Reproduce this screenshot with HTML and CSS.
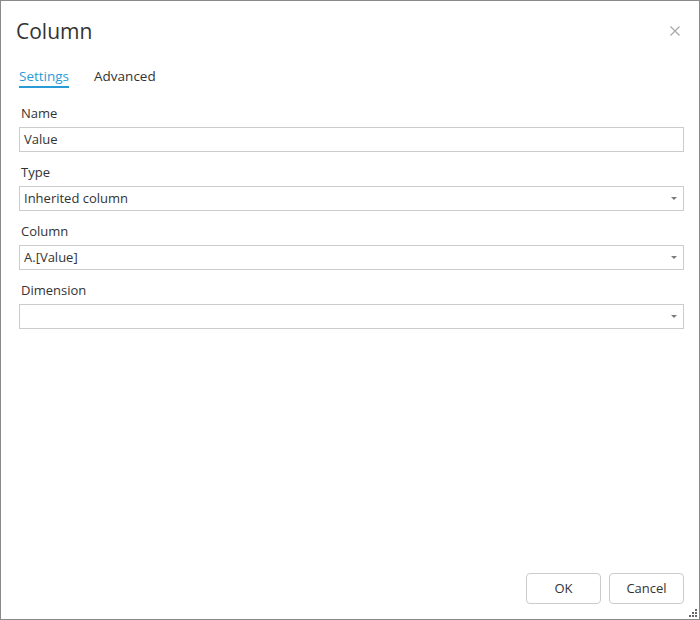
FILE: index.html
```html
<!DOCTYPE html>
<html>
<head>
<meta charset="utf-8">
<link rel="stylesheet" href="styles.css">
</head>
<body>
<div class="dialog">
  <div class="header">
    <div class="title">Column</div>
    <svg class="close" width="10" height="10" viewBox="0 0 10 10"><path d="M0.5 0.5L9.5 9.5M9.5 0.5L0.5 9.5" stroke="#a8a8a8" stroke-width="1.2" fill="none"/></svg>
  </div>
  <div class="tabs">
    <div class="tab active">Settings</div>
    <div class="tab">Advanced</div>
  </div>
  <div class="form">
    <div class="field">
      <div class="label">Name</div>
      <div class="input">Value</div>
    </div>
    <div class="field">
      <div class="label">Type</div>
      <div class="input select">Inherited column<span class="arrow"></span></div>
    </div>
    <div class="field">
      <div class="label">Column</div>
      <div class="input select">A.[Value]<span class="arrow"></span></div>
    </div>
    <div class="field">
      <div class="label">Dimension</div>
      <div class="input select"><span class="arrow"></span></div>
    </div>
  </div>
  <div class="footer">
    <div class="btn">OK</div>
    <div class="btn">Cancel</div>
  </div>
  <svg class="grip" width="9" height="9" viewBox="0 0 9 9">
    <rect x="6" y="0" width="2" height="2" fill="#666"/>
    <rect x="3" y="3" width="2" height="2" fill="#666"/>
    <rect x="6" y="3" width="2" height="2" fill="#666"/>
    <rect x="0" y="6" width="2" height="2" fill="#666"/>
    <rect x="3" y="6" width="2" height="2" fill="#666"/>
    <rect x="6" y="6" width="2" height="2" fill="#666"/>
  </svg>
</div>
</body>
</html>
```

FILE: styles.css
```css
html, body {
  margin: 0;
  padding: 0;
  background: #fff;
}
.dialog {
  width: 700px;
  height: 620px;
  box-sizing: border-box;
  border: 1px solid #8a8a8a;
  display: flex;
  flex-direction: column;
  position: relative;
  font-family: "Open Sans", "Noto Sans", sans-serif;
  color: #333;
  font-size: 13px;
}
.header {
  display: flex;
  justify-content: space-between;
  align-items: center;
  padding: 14px 19px 0 15px;
  height: 32px;
}
.title {
  font-size: 21px;
  line-height: 32px;
  color: #333;
}
.close {
  display: block;
}
.tabs {
  display: flex;
  gap: 25px;
  padding: 0 0 0 18px;
  margin-top: 19px;
}
.tab {
  line-height: 20px;
  border-bottom: 2px solid transparent;
  font-size: 13.5px;
}
.tab.active {
  color: #2b9bd7;
  border-bottom-color: #2b9bd7;
}
.form {
  display: flex;
  flex-direction: column;
  gap: 10px;
  padding: 0 15px 0 18px;
  margin-top: 15px;
  flex: 1;
}
.field {
  display: flex;
  flex-direction: column;
}
.label {
  line-height: 20px;
  margin: 0 0 4px 2px;
}
.input {
  height: 25px;
  box-sizing: border-box;
  border: 1px solid #cccccc;
  line-height: 23px;
  padding: 0 4px;
  position: relative;
}
.arrow {
  position: absolute;
  right: 6px;
  top: 10px;
  width: 0;
  height: 0;
  border-left: 3px solid transparent;
  border-right: 3px solid transparent;
  border-top: 3px solid #7a7a7a;
}
.footer {
  display: flex;
  justify-content: flex-end;
  gap: 8px;
  padding: 0 15px 15px 0;
}
.btn {
  width: 75px;
  height: 31px;
  box-sizing: border-box;
  border: 1px solid #cccccc;
  border-radius: 4px;
  text-align: center;
  line-height: 29px;
  font-size: 13px;
  color: #333;
}
.grip {
  position: absolute;
  right: 1px;
  bottom: 1px;
}
```
